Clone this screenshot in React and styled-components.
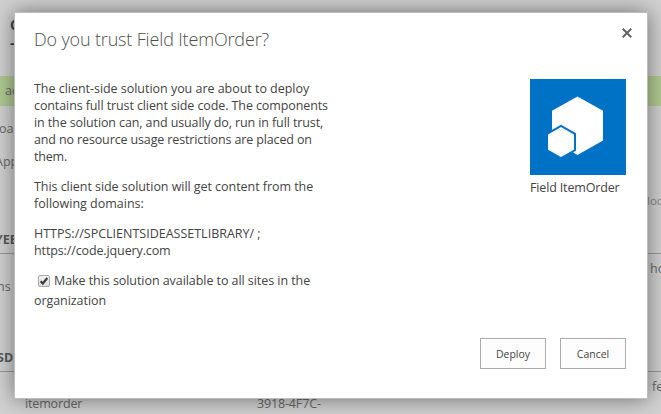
import React from "react";
import styled, { createGlobalStyle } from "styled-components";

const GlobalStyle = createGlobalStyle`
  * { box-sizing: border-box; }
  body {
    margin: 0;
    overflow: hidden;
    background: #d1d1d1;
    font: 12.5px/17px "Open Sans", "Noto Sans", sans-serif;
    color: #444;
  }
`;

const Screen = styled.div`
  position: relative;
  width: 661px;
  height: 414px;
  overflow: hidden;
`;

/* The dimmed page that shows around the dialog */
const Page = styled.div`
  display: flex;
  flex-direction: column;
  height: 100%;
  color: #686868;
  white-space: nowrap;
`;

const PageHeading = styled.div`
  height: 76px;
  padding: 16px 0 0 10px;
  font-size: 14px;
  font-weight: 700;
  line-height: 18px;
  color: #444;
`;

const NoticeBar = styled.div`
  height: 30px;
  padding-left: 5px;
  line-height: 30px;
  background: #b0cb92;
`;

const PageRow = styled.div`
  display: flex;
  justify-content: space-between;
  height: ${(p) => p.$height}px;
  padding-top: ${(p) => p.$top || 0}px;
  border-bottom: ${(p) => (p.$ruled ? "1px solid #999" : "0")};
`;

const LeftColumn = styled.div`
  display: flex;
  flex-direction: column;
  justify-content: space-between;
  margin-left: ${(p) => p.$indent || 0}px;
  padding-bottom: 5px;
`;

const ColumnHeading = styled.span`
  font-weight: 700;
  color: #5a5a5a;
`;

const LeftCell = styled.span`
  margin-top: ${(p) => p.$drop || 0}px;
`;

const RightCell = styled.span`
  flex: none;
  width: ${(p) => p.$width}px;
  margin-top: ${(p) => p.$drop || 0}px;
  font-size: ${(p) => (p.$small ? 11.5 : 12.5)}px;
  color: ${(p) => (p.$small ? "#888" : "#686868")};
`;

const PackageRow = styled.div`
  display: grid;
  grid-template-columns: 232px 1fr;
  padding-left: 25px;
  letter-spacing: -0.15px;
`;

const Dialog = styled.section`
  position: absolute;
  left: 14px;
  top: 12px;
  width: 634px;
  height: 387px;
  display: flex;
  flex-direction: column;
  padding: 13px 21px 29px 19px;
  background: #fff;
  border: 1px solid #bdbdbd;
  box-shadow: 0 0 20px rgba(0, 0, 0, 0.47);
`;

const Header = styled.header`
  display: flex;
  justify-content: space-between;
  height: 53px;
`;

const Title = styled.h1`
  margin: 0;
  font-size: 18px;
  font-weight: 300;
  line-height: 26px;
  letter-spacing: -0.16px;
  color: #505050;
`;

const CloseButton = styled.button`
  width: 10px;
  height: 10px;
  margin-top: 2px;
  margin-right: -6px;
  padding: 0;
  border: 0;
  background: none;
  svg { display: block; }
`;

const Body = styled.div`
  display: flex;
  justify-content: space-between;
  flex: 1;
`;

const Message = styled.div`
  padding-top: 1px;
  white-space: nowrap;
`;

const Paragraph = styled.p`
  margin: 0 0 13px;
`;

const Line = styled.span`
  display: block;
  letter-spacing: ${(p) => p.$tracking || 0}px;
`;

const Option = styled.label`
  display: block;
  margin-top: -1px;
  line-height: 20px;
`;

const OptionLine = styled.span`
  display: flex;
  align-items: center;
  letter-spacing: -0.06px;
`;

const Checkbox = styled.span`
  width: 12px;
  height: 12px;
  margin: 0 4px;
  border: 1px solid #a9a9a9;
  border-radius: 2px;
  background: linear-gradient(#f2f2f2, #dedede);
  svg { display: block; overflow: visible; }
`;

const AppCard = styled.aside`
  width: 96px;
  letter-spacing: -0.15px;
  white-space: nowrap;
  svg { display: block; margin-bottom: 4px; }
`;

const Actions = styled.footer`
  display: flex;
  justify-content: flex-end;
  gap: 14px;
`;

const Button = styled.button`
  width: 66px;
  height: 31px;
  padding: 0;
  border: 1px solid #ababab;
  background: #fdfdfd;
  font: 10.5px "Open Sans", "Noto Sans", sans-serif;
  color: #444;
`;

const CloseIcon = () => (
  <svg width="10" height="10" viewBox="0 0 10 10">
    <path d="M.7.7 9.3 9.3M9.3.7.7 9.3" stroke="#666" strokeWidth="2.1" />
  </svg>
);

const CheckIcon = () => (
  <svg width="10" height="10" viewBox="0 0 10 10">
    <path d="M1.6 5.3 3.8 7.5 8.3 2" fill="none" stroke="#404040" strokeWidth="2.2" />
  </svg>
);

const AppLogo = () => (
  <svg width="96" height="96" viewBox="0 0 96 96">
    <path fill="#0072c6" d="M0 0h96v96H0z" />
    <path fill="#fff" d="M47.5 17.4 73 31.8V61.5L47.5 76 22 61.5V31.8z" />
    <path
      fill="#fff"
      stroke="#0072c6"
      strokeWidth="4"
      paintOrder="stroke"
      d="M31 48 44 55.5V70.7L31 78 18 70.7V55.5z"
    />
  </svg>
);

export default function App() {
  return (
    <Screen>
      <GlobalStyle />
      <Page>
        <PageHeading>
          C<br />-
        </PageHeading>
        <NoticeBar>ac</NoticeBar>
        <PageRow $height={33} $top={14}>
          <LeftColumn $indent={-1}>
            <LeftCell>oa</LeftCell>
          </LeftColumn>
        </PageRow>
        <PageRow $height={115} $top={14} $ruled>
          <LeftColumn $indent={-5}>
            <LeftCell>App</LeftCell>
            <ColumnHeading>YEE</ColumnHeading>
          </LeftColumn>
          <RightCell $width={14} $drop={39} $small>loc</RightCell>
        </PageRow>
        <PageRow $height={118} $top={6} $ruled>
          <LeftColumn $indent={-3}>
            <LeftCell $drop={18}>ns</LeftCell>
            <ColumnHeading>SD</ColumnHeading>
          </LeftColumn>
          <RightCell $width={11}>ho</RightCell>
        </PageRow>
        <PageRow $height={23} $top={6}>
          <LeftColumn />
          <RightCell $width={9}>fe</RightCell>
        </PageRow>
        <PackageRow>
          <span>itemorder</span>
          <span>3918-4F7C-</span>
        </PackageRow>
      </Page>

      <Dialog>
        <Header>
          <Title>Do you trust Field ItemOrder?</Title>
          <CloseButton aria-label="Close">
            <CloseIcon />
          </CloseButton>
        </Header>
        <Body>
          <Message>
            <Paragraph>
              <Line $tracking={-0.03}>The client-side solution you are about to deploy</Line>
              <Line $tracking={-0.1}>contains full trust client side code. The components</Line>
              <Line $tracking={-0.11}>in the solution can, and usually do, run in full trust,</Line>
              <Line $tracking={-0.13}>and no resource usage restrictions are placed on</Line>
              <Line $tracking={-0.2}>them.</Line>
            </Paragraph>
            <Paragraph>
              <Line $tracking={-0.05}>This client side solution will get content from the</Line>
              <Line>following domains:</Line>
            </Paragraph>
            <Paragraph>
              <Line>HTTPS://SPCLIENTSIDEASSETLIBRARY/ ;</Line>
              <Line $tracking={-0.12}>https://code.jquery.com</Line>
            </Paragraph>
            <Option>
              <OptionLine>
                <Checkbox role="checkbox" aria-checked="true">
                  <CheckIcon />
                </Checkbox>
                Make this solution available to all sites in the
              </OptionLine>
              <OptionLine>organization</OptionLine>
            </Option>
          </Message>
          <AppCard>
            <AppLogo />
            Field ItemOrder
          </AppCard>
        </Body>
        <Actions>
          <Button>Deploy</Button>
          <Button>Cancel</Button>
        </Actions>
      </Dialog>
    </Screen>
  );
}
